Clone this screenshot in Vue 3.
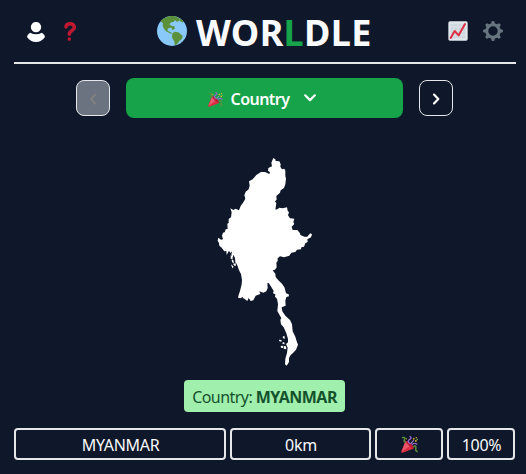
<script setup>
const title = 'WORLDLE'.split('')
const cells = ['MYANMAR', '0km', '', '100%']
</script>

<template>
  <main class="game">
    <header class="header">
      <div class="group left">
        <svg class="user" viewBox="0 0 18 20"><circle cx="9" cy="5.1" r="5.2" /><path d="M3.1 10.7Q9 14 14.9 10.7Q18 12.5 18 15Q14.5 20 9 20Q3.5 20 0 15Q0 12.5 3.1 10.7Z" /></svg>
        <svg class="question" viewBox="0 0 12 19"><path d="M2 5C2.1 2.9 3.7 1.8 6.2 1.8C8.8 1.8 10.3 3.1 10.3 5.3C10.3 7.2 9.1 8 7.5 8.9C6 9.8 5.3 10.6 5.3 12.3" /><circle cx="5.3" cy="17.1" r="1.8" /></svg>
      </div>
      <h1 class="brand">
        <svg class="globe" viewBox="0 0 90 90"><circle cx="45" cy="45" r="45" fill="#88c9f9" /><path fill="#5c913b" d="M10 16Q22 2 42 0Q57 -1 67 7L68 14L59 17L54 12L50 18L43 19L37 25L45 31L51 29L54 37L47 43L43 35L35 36L31 41L34 46L42 49L45 55L38 51L27 46L21 38L17 30L18 22ZM68 6L79 15L78 20L69 15ZM47 51L55 47L64 49L70 54L77 59L75 68L68 74L60 85L53 88L52 76L47 69L45 61Z" /></svg>
        <span class="word"><span v-for="(c, i) in title" :key="i" :class="{ green: i === 3 }">{{ c }}</span></span>
      </h1>
      <div class="group right">
        <svg class="chart" viewBox="0 0 60 60"><rect x="1" y="1" width="58" height="58" rx="5" fill="#e1e8ed" /><path d="M7 7H53V53H7ZM7 18H53M7 30H53M7 42H53M18 7V53M30 7V53M42 7V53" fill="#ccd6dd" stroke="#e1e8ed" stroke-width="2" /><path d="M8 51L20 30L32 43L51 9" fill="none" stroke="#dd2e44" stroke-width="6" stroke-linecap="round" stroke-linejoin="round" /></svg>
        <svg class="gear" viewBox="0 0 60 60"><circle cx="30" cy="30" r="18.7" fill="none" stroke="#66757f" stroke-width="9" /><path v-for="a in 8" :key="a" :transform="`rotate(${a * 45} 30 30)`" d="M24 10L26 1Q30 -1 34 1L36 10Z" fill="#66757f" /></svg>
      </div>
    </header>

    <nav class="rounds">
      <button class="step disabled"><svg viewBox="0 0 8 12"><path d="M6.1 1.6L2 6L6.1 10.4" /></svg></button>
      <button class="current">
        <svg class="party small" viewBox="0 0 48 48"><use href="#popper" /></svg>
        <span>Country</span>
        <svg class="down" viewBox="0 0 12 8"><path d="M1.2 1.3L6 6.1L10.8 1.3" /></svg>
      </button>
      <button class="step"><svg viewBox="0 0 8 12"><path d="M2 1.6L6.3 6L2 10.4" /></svg></button>
    </nav>

    <svg class="map" viewBox="0 0 330 660">
      <path d="M190 24L196 28L197 33L208 34L212 42L211 50L216 58L223 56L226 62L226 78L228 86L226 103L222 114L212 121L210 128L199 138L200 149L195 154L199 160L196 179L203 177L208 173L218 175L231 172L233 182L237 187L234 196L240 205L253 206L250 216L253 222L245 230L248 240L262 240L270 250L271 255L283 260L292 260L296 255L301 250L306 253L303 262L292 268L293 276L286 280L282 290L274 292L273 298L261 299L256 306L244 308L238 317L222 322L210 319L203 325L203 333L199 338L200 352L195 359L188 361L196 371L197 381L205 391L216 401L224 413L228 430L236 433L237 439L229 441L226 452L227 467L215 472L217 484L226 497L240 510L246 523L248 544L256 560L260 574L264 584L258 599L249 609L242 615L237 624L237 636L230 647L225 643L226 626L231 609L233 593L228 582L234 577L234 567L229 550L221 532L213 523L211 509L214 505L207 492L202 483L204 463L201 446L195 440L196 433L189 430L191 423L184 411L176 399L172 400L173 414L169 424L160 428L148 424L151 432L137 437L130 451L122 453L116 444L112 453L105 448L101 444L99 447L98 440L92 445L84 443L86 435L90 423L95 403L96 390L93 372L87 361L83 349L80 342L76 337L75 324L70 314L68 324L64 315L66 304L61 309L57 302L50 315L49 303L43 304L35 293L28 287L27 279L23 272L25 263L33 269L39 268L36 257L39 248L44 247L47 238L53 237L52 221L56 219L56 207L63 202L65 187L61 175L70 180L77 176L87 181L92 168L100 157L106 146L103 136L107 125L116 118L119 107L117 94L128 88L139 75L153 66L165 66L178 72L180 66L174 63L175 54L186 49L184 38Z" />
      <path d="M62 316L67 319L68 327L62 326ZM65 328L70 330L72 339L66 337ZM69 341L77 340L78 347L73 347ZM63 343L71 350L67 355ZM218 560L223 557L225 566L219 565ZM207 569L215 570L214 575L208 574ZM217 578L222 576L224 583L218 582ZM212 588L220 587L219 594L213 593ZM222 588L228 589L229 598L221 596Z" />
    </svg>

    <div class="answer">Country: <b>MYANMAR</b></div>

    <div class="result">
      <div v-for="(c, i) in cells" :key="i" class="cell">
        <span v-if="c">{{ c }}</span>
        <svg v-else class="party" viewBox="0 0 48 48">
          <g id="popper">
            <path d="M13 13L36 35L3 48L0 45Z" fill="#dd2e44" /><path d="M13 15L7 32L2 44L24 29Z" fill="#ea596e" />
            <ellipse cx="25" cy="24" rx="4" ry="14" transform="rotate(-45 25 24)" fill="#be1931" />
            <path d="M3 5Q14 2 10 10Q6 16 14 18M34 31Q43 24 42 34Q39 41 47 45" fill="none" stroke="#5c913b" stroke-width="4" />
            <path d="M24 1Q33 4 24 10Q17 15 25 22M31 25Q37 17 46 24" fill="none" stroke="#9266cc" stroke-width="4" />
            <path d="M27 22L36 12" stroke="#aa8dd8" stroke-width="3" />
            <g fill="#e8b923"><circle cx="36" cy="8" r="2.5" /><circle cx="43" cy="5" r="2" /><circle cx="42" cy="14" r="2.5" /><circle cx="15" cy="8" r="2" /></g>
            <circle cx="46" cy="10" r="2" fill="#77b255" />
          </g>
        </svg>
      </div>
    </div>
  </main>
</template>

<style>
body { margin: 0; background: #0f172a; }
</style>
<style scoped>
.game { box-sizing: border-box; height: 474px; padding: 0 10px 0 14px; display: flex; flex-direction: column; background: #0f172a; color: #f8fafc; font: 16px "Noto Sans", "Open Sans", sans-serif; overflow: hidden; }
svg { display: block; flex: none; }
.header { flex: none; height: 62px; border-bottom: 2px solid #e5e7eb; display: grid; grid-template-columns: 142px 216px 1fr; align-items: center; }
.group { display: flex; align-items: center; }
.left { padding-left: 13px; gap: 19px; }
.right { justify-content: flex-end; padding-right: 13px; gap: 15px; }
.user { width: 18px; height: 20px; fill: #fff; margin-top: 2px; }
.question { width: 12px; height: 19px; margin-top: 1px; }
.question path { fill: none; stroke: #be1931; stroke-width: 3.5; stroke-linecap: round; }
.question circle { fill: #be1931; }
.brand { margin: 0; display: flex; align-items: center; gap: 9px; font-size: 36px; line-height: 40px; font-weight: 700; }
.globe { width: 30px; height: 30px; margin-left: 1px; }
.word { white-space: nowrap; letter-spacing: .35px; padding-top: 3px; }
.green { color: #16a34a; }
.chart { width: 20px; height: 20px; }
.gear { width: 20px; height: 20px; }
.rounds { flex: none; display: flex; align-items: center; gap: 16px; height: 40px; margin: 14px 0 0 62px; }
button { box-sizing: border-box; padding: 0; margin: 0; font: inherit; color: #fff; display: flex; align-items: center; justify-content: center; }
.step { width: 34px; height: 36px; border: 1px solid #e5e7eb; border-radius: 8px; background: transparent; }
.step svg { width: 8px; height: 12px; margin-top: 2px; }
button path { stroke-linecap: round; stroke-linejoin: round; }
.step path, .down path { fill: none; stroke: currentColor; stroke-width: 2.2; }
.disabled { background: #6b7280; color: #808080; }
.current { width: 277px; height: 40px; border: 0; border-radius: 8px; background: #16a34a; font-weight: 600; font-size: 16px; letter-spacing: -.55px; padding-right: 5px; }
.current span { padding-top: 2px; }
.down { width: 12px; height: 8px; margin-left: 15px; }
.party { width: 17px; height: 17px; margin-top: -1px; }
.small { width: 15px; height: 15px; margin-right: 8px; margin-top: 2px; }
.map { width: 110px; height: 220px; margin: 32px 0 10px 196px; fill: #fff; }
.answer { flex: none; align-self: flex-start; box-sizing: border-box; width: 161px; height: 32px; margin-left: 170px; border-radius: 4px; background: #a1efac; color: #14532d; line-height: 35px; text-align: center; white-space: nowrap; letter-spacing: -.55px; }
.result { flex: none; display: grid; grid-template-columns: 212px 141px 68px 68px; gap: 4px; height: 32px; margin-top: 16px; }
.cell { box-sizing: border-box; border: 2px solid #e5e7eb; border-radius: 4px; display: flex; align-items: center; justify-content: center; letter-spacing: -.3px; padding: 2px 0 0 1px; line-height: 24px; }
</style>
